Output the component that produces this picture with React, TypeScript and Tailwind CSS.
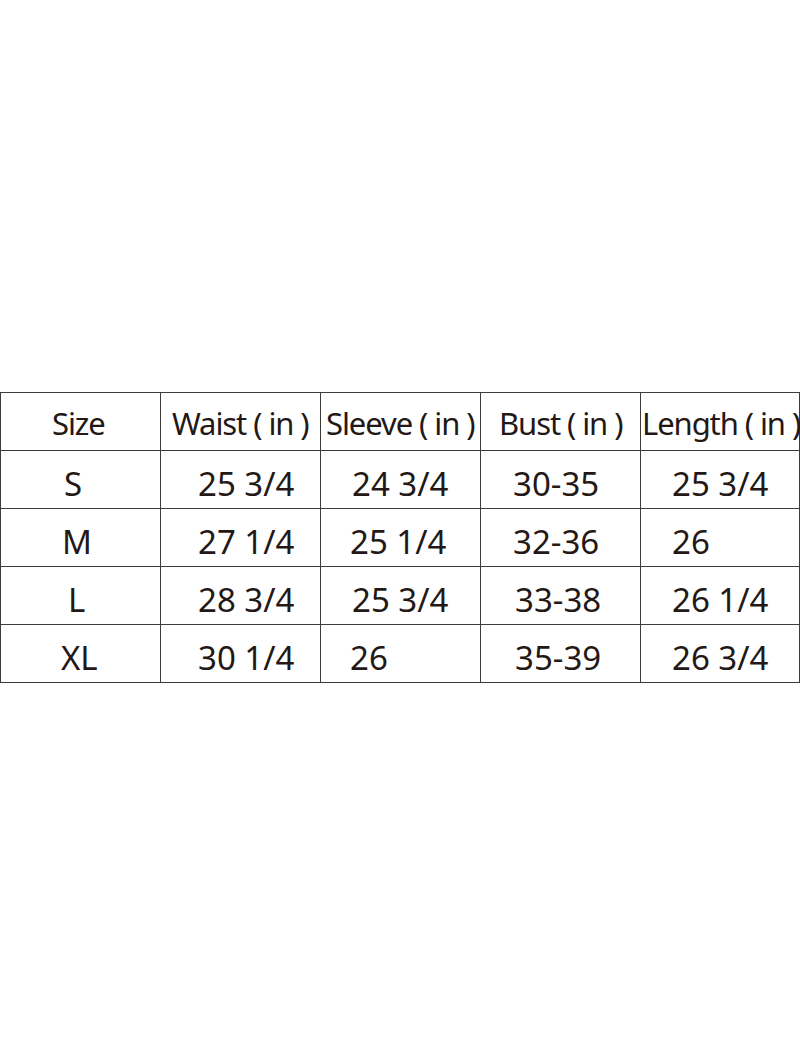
import React from 'react';

type Cell = { text: string; pad: string };

const header: Cell[] = [
  { text: 'Size', pad: 'pl-[51px]' },
  { text: 'Waist ( in )', pad: 'pl-[11px]' },
  { text: 'Sleeve ( in )', pad: 'pl-[5px]' },
  { text: 'Bust ( in )', pad: 'pl-[18px]' },
  { text: 'Length ( in )', pad: 'pl-[1px]' },
];

const rows: Cell[][] = [
  [
    { text: 'S', pad: 'pl-[63px]' },
    { text: '25 3/4', pad: 'pl-[37px]' },
    { text: '24 3/4', pad: 'pl-[31px]' },
    { text: '30-35', pad: 'pl-[32px]' },
    { text: '25 3/4', pad: 'pl-[31px]' },
  ],
  [
    { text: 'M', pad: 'pl-[61px]' },
    { text: '27 1/4', pad: 'pl-[37px]' },
    { text: '25 1/4', pad: 'pl-[29px]' },
    { text: '32-36', pad: 'pl-[32px]' },
    { text: '26', pad: 'pl-[31px]' },
  ],
  [
    { text: 'L', pad: 'pl-[67px]' },
    { text: '28 3/4', pad: 'pl-[37px]' },
    { text: '25 3/4', pad: 'pl-[31px]' },
    { text: '33-38', pad: 'pl-[34px]' },
    { text: '26 1/4', pad: 'pl-[31px]' },
  ],
  [
    { text: 'XL', pad: 'pl-[60px]' },
    { text: '30 1/4', pad: 'pl-[37px]' },
    { text: '26', pad: 'pl-[29px]' },
    { text: '35-39', pad: 'pl-[34px]' },
    { text: '26 3/4', pad: 'pl-[31px]' },
  ],
];

export default function App() {
  return (
    <div className="w-[800px] h-[1050px] bg-white pt-[392px] font-['Noto_Sans',sans-serif] text-[#231815]">
      <div className="grid grid-cols-[160px_160px_160px_160px_159px] border-t border-l border-[#3e3a39] w-[800px]">
        {header.map((c, i) => (
          <div
            key={i}
            className={`h-[58px] flex items-center border-r border-b border-[#3e3a39] text-[31px] tracking-[-0.035em] whitespace-nowrap pt-[4px] ${c.pad}`}
          >
            {c.text}
          </div>
        ))}
        {rows.map((r, ri) =>
          r.map((c, i) => (
            <div
              key={`${ri}-${i}`}
              className={`h-[58px] flex items-center border-r border-b border-[#3e3a39] text-[33px] whitespace-nowrap pt-[8px] ${c.pad}`}
            >
              {c.text}
            </div>
          ))
        )}
      </div>
    </div>
  );
}
